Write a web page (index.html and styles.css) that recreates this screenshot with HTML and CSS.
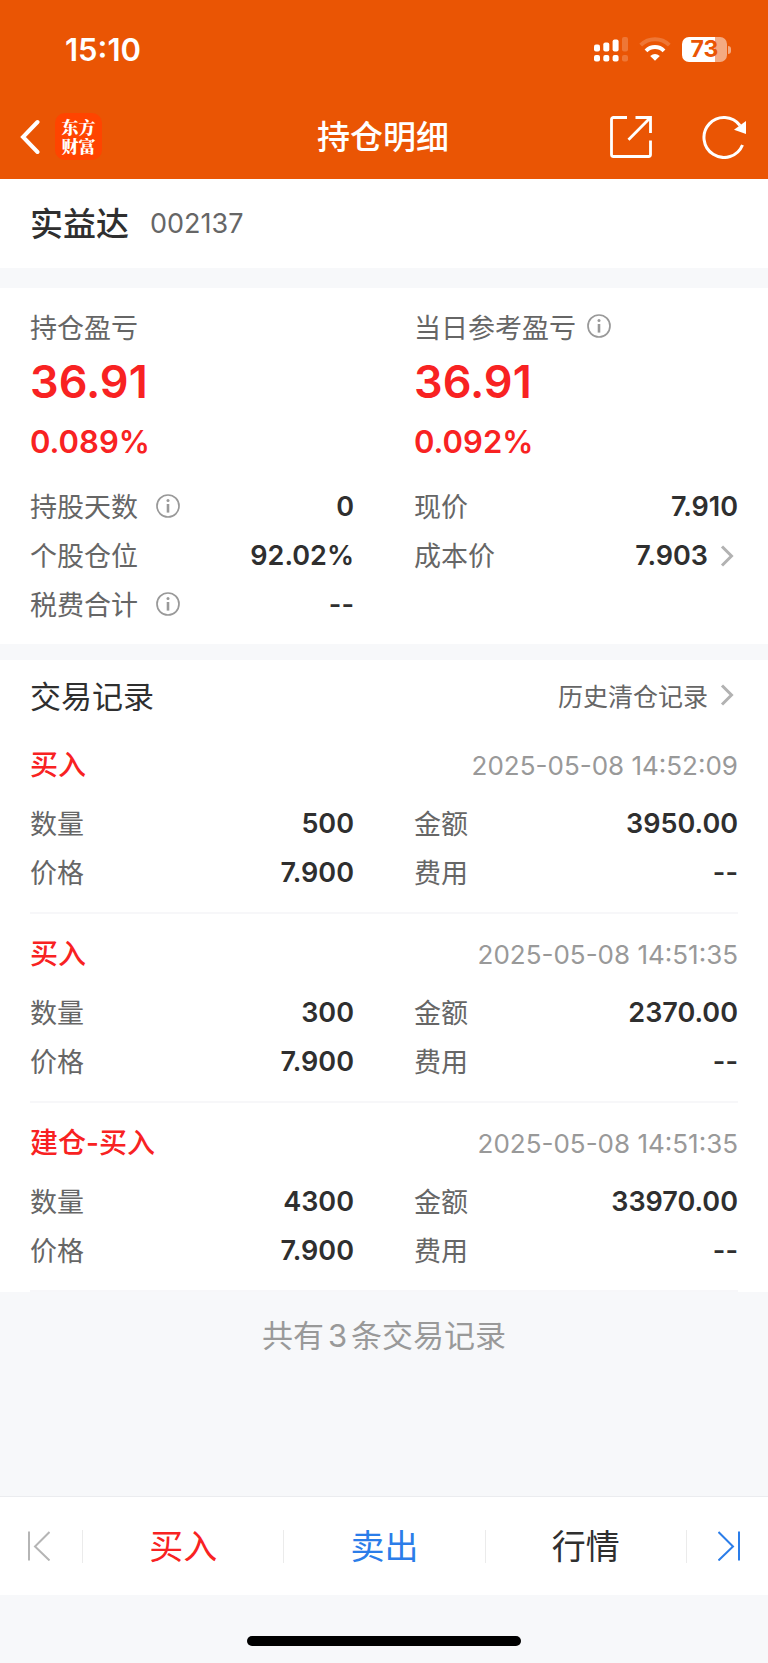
FILE: index.html
```html
<!DOCTYPE html>
<html lang="zh-CN">
<head>
<meta charset="utf-8">
<meta name="viewport" content="width=device-width, initial-scale=1">
<title>持仓明细</title>
<link rel="stylesheet" href="styles.css">
</head>
<body>
<svg class="sprite" aria-hidden="true">
  <symbol id="info" viewBox="0 0 24 24">
    <circle cx="12" cy="12" r="11" fill="none" stroke="currentColor" stroke-width="1.700"/>
    <circle cx="12" cy="6.6" r="1.5" fill="currentColor"/>
    <path d="M12 10v8.600" stroke="currentColor" stroke-width="2.600" fill="none"/>
  </symbol>
  <symbol id="chevron" viewBox="0 0 14 22">
    <path d="M2 1.500L11.500 11L2 20.500" fill="none" stroke="currentColor" stroke-width="3"/>
  </symbol>
</svg>

<header class="header">
  <div class="status">
    <time class="clock">15:10</time>
    <div class="indicators">
      <svg class="signal" viewBox="0 0 34 25" fill="#fff" aria-hidden="true">
        <rect x="0" y="7.500" width="6" height="7" rx="2"/><rect x="9.300" y="5.500" width="6" height="9" rx="2"/>
        <rect x="18.600" y="2.500" width="6" height="12" rx="2"/><rect x="28" y="0" width="6" height="14.500" rx="2" opacity=".2"/>
        <rect x="0" y="18" width="6" height="6.500" rx="2"/><rect x="9.300" y="18" width="6" height="6.500" rx="2"/>
        <rect x="18.600" y="18" width="6" height="6.500" rx="2"/><rect x="28" y="18" width="6" height="6.500" rx="2" opacity=".2"/>
      </svg>
      <svg class="wifi" viewBox="0 0 32 24" fill="none" stroke="#fff" stroke-width="4" aria-hidden="true">
        <path d="M1.700 8.200a20.300 20.300 0 0 1 28.600 0" opacity=".2"/>
        <path d="M7 13.800a12.700 12.700 0 0 1 18 0"/>
        <path d="M16 23.800l-4.800-4.700q4.800-4 9.600 0z" fill="#fff" stroke="none"/>
      </svg>
      <div class="battery"><span class="charge">73</span></div>
    </div>
  </div>
  <nav class="navbar">
    <div class="nav-side">
      <button class="icon-button" type="button" aria-label="返回">
        <svg class="back" viewBox="0 0 20 36"><path d="M17.500 3L3 18L17.500 33" fill="none" stroke="#fff" stroke-width="4" stroke-linecap="round"/></svg>
      </button>
      <div class="logo"><span>东方</span><span>财富</span></div>
    </div>
    <h1 class="page-title">持仓明细</h1>
    <div class="nav-side nav-actions">
      <button class="icon-button" type="button" aria-label="分享">
        <svg class="nav-icon" viewBox="0 0 44 44" fill="none" stroke="#fff" stroke-width="2.800">
          <path d="M18 2.500H4.500a2 2 0 0 0-2 2v35a2 2 0 0 0 2 2h35a2 2 0 0 0 2-2V25.500M26.500 2.500h15V18M41 3L19.500 24.800"/>
        </svg>
      </button>
      <button class="icon-button" type="button" aria-label="刷新">
        <svg class="nav-icon" viewBox="0 0 44 44">
          <path d="M40.500 30A20 20 0 1 1 38 10.500" fill="none" stroke="#fff" stroke-width="3"/>
          <path d="M44 6v13L32 14.800z" fill="#fff"/>
        </svg>
      </button>
    </div>
  </nav>
</header>

<main class="main">
  <section class="stock">
    <h2 class="stock-name">实益达</h2>
    <span class="stock-code">002137</span>
  </section>

  <section class="position">
    <div class="columns">
      <div class="profit">
        <div class="profit-label">持仓盈亏</div>
        <div class="profit-value">36.91</div>
        <div class="profit-rate">0.089%</div>
      </div>
      <div class="profit">
        <div class="profit-label">当日参考盈亏<button class="info-button near" type="button" aria-label="当日参考盈亏说明"><svg class="info"><use href="#info"/></svg></button></div>
        <div class="profit-value">36.91</div>
        <div class="profit-rate">0.092%</div>
      </div>
    </div>
    <div class="columns">
      <dl class="facts">
        <div class="fact"><dt>持股天数<button class="info-button" type="button" aria-label="持股天数说明"><svg class="info"><use href="#info"/></svg></button></dt><dd>0</dd></div>
        <div class="fact"><dt>个股仓位</dt><dd>92.02%</dd></div>
        <div class="fact"><dt>税费合计<button class="info-button" type="button" aria-label="税费合计说明"><svg class="info"><use href="#info"/></svg></button></dt><dd>--</dd></div>
      </dl>
      <dl class="facts">
        <div class="fact"><dt>现价</dt><dd>7.910</dd></div>
        <div class="fact"><dt>成本价</dt><dd><a class="more" href="#cost">7.903<svg class="chevron"><use href="#chevron"/></svg></a></dd></div>
      </dl>
    </div>
  </section>

  <section class="records">
    <div class="records-head">
      <h2 class="records-title">交易记录</h2>
      <a class="more history" href="#history">历史清仓记录<svg class="chevron"><use href="#chevron"/></svg></a>
    </div>
    <article class="record">
      <div class="record-head"><h3 class="side">买入</h3><time class="stamp">2025-05-08 14:52:09</time></div>
      <dl class="columns facts">
        <div class="fact"><dt>数量</dt><dd>500</dd></div>
        <div class="fact"><dt>金额</dt><dd>3950.00</dd></div>
        <div class="fact"><dt>价格</dt><dd>7.900</dd></div>
        <div class="fact"><dt>费用</dt><dd>--</dd></div>
      </dl>
    </article>
    <article class="record">
      <div class="record-head"><h3 class="side">买入</h3><time class="stamp">2025-05-08 14:51:35</time></div>
      <dl class="columns facts">
        <div class="fact"><dt>数量</dt><dd>300</dd></div>
        <div class="fact"><dt>金额</dt><dd>2370.00</dd></div>
        <div class="fact"><dt>价格</dt><dd>7.900</dd></div>
        <div class="fact"><dt>费用</dt><dd>--</dd></div>
      </dl>
    </article>
    <article class="record">
      <div class="record-head"><h3 class="side">建仓-买入</h3><time class="stamp">2025-05-08 14:51:35</time></div>
      <dl class="columns facts">
        <div class="fact"><dt>数量</dt><dd>4300</dd></div>
        <div class="fact"><dt>金额</dt><dd>33970.00</dd></div>
        <div class="fact"><dt>价格</dt><dd>7.900</dd></div>
        <div class="fact"><dt>费用</dt><dd>--</dd></div>
      </dl>
    </article>
  </section>
  <p class="total">共有<span class="count">3</span>条交易记录</p>
</main>

<footer>
  <nav class="tabs">
    <button class="tab prev" type="button" aria-label="上一只" disabled>
      <svg class="step" viewBox="0 0 22 30" fill="none" stroke="currentColor" stroke-width="2"><path d="M1 .5v29M21.500 1L7 15.500L21.500 29.500"/></svg>
    </button>
    <button class="tab buy" type="button">买入</button>
    <button class="tab sell" type="button">卖出</button>
    <button class="tab" type="button">行情</button>
    <button class="tab next" type="button" aria-label="下一只">
      <svg class="step" viewBox="0 0 22 30" fill="none" stroke="currentColor" stroke-width="2"><path d="M21 .5v29M.5 1L15 15.500L.5 29.500"/></svg>
    </button>
  </nav>
  <div class="home"><div class="home-bar"></div></div>
</footer>
</body>
</html>
```

FILE: styles.css
```css
* {
  box-sizing: border-box;
}

body {
  margin: 0;
  min-height: 100vh;
  display: flex;
  flex-direction: column;
  background: #f7f8fa;
  color: #2f2f2f;
  font-family: Inter, "Noto Sans CJK SC", sans-serif;
  font-size: 27px;
}

h1, h2, h3, p, dl, dd {
  margin: 0;
  font-weight: 400;
}

button {
  margin: 0;
  padding: 0;
  border: 0;
  background: none;
  color: inherit;
  font: inherit;
}

a {
  color: inherit;
  text-decoration: none;
}

svg {
  display: block;
}

.sprite {
  display: none;
}

/* Header */
.header {
  background: #ea5504;
  color: #fff;
}

.status {
  display: flex;
  justify-content: space-between;
  align-items: center;
  height: 98px;
  padding: 0 37px 0 65px;
}

.clock {
  font-size: 31px;
  font-weight: 600;
}

.indicators {
  display: flex;
  align-items: center;
  gap: 11px;
}

.signal {
  width: 34px;
  height: 25px;
}

.wifi {
  width: 32px;
  height: 24px;
}

.battery {
  position: relative;
  width: 45px;
  height: 25px;
  margin-right: 4px;
  border-radius: 7px;
  background: linear-gradient(90deg, #fff 73%, #f4aa82 73%);
  color: #ea5504;
  text-align: center;
}

.battery::after {
  content: "";
  position: absolute;
  left: 46px;
  top: 9px;
  width: 3px;
  height: 8px;
  border-radius: 0 3px 3px 0;
  background: #f4aa82;
}

.charge {
  display: block;
  font-size: 23px;
  font-weight: 700;
  line-height: 25px;
}

.navbar {
  display: grid;
  grid-template-columns: 1fr auto 1fr;
  align-items: center;
  height: 81px;
  padding: 0 22px 4px 20px;
}

.nav-side {
  display: flex;
  align-items: center;
  gap: 15px;
}

.nav-actions {
  justify-content: flex-end;
  gap: 49px;
}

.back {
  width: 20px;
  height: 36px;
}

.nav-icon {
  width: 44px;
  height: 44px;
}

.logo {
  display: flex;
  flex-direction: column;
  align-items: center;
  justify-content: center;
  width: 47px;
  height: 47px;
  padding-bottom: 2px;
  border-radius: 10px;
  background: #ff4400;
  font-family: "Noto Serif CJK SC", "Noto Sans CJK SC", serif;
  font-size: 17px;
  font-weight: 900;
  line-height: 19px;
}

.page-title {
  font-size: 33px;
  font-weight: 500;
  line-height: 48px;
}

/* Stock heading */
.stock {
  display: flex;
  align-items: center;
  gap: 21px;
  height: 89px;
  padding: 0 30px;
  background: #fff;
}

.stock-name {
  padding-bottom: 4px;
  font-size: 33px;
  font-weight: 500;
}

.stock-code {
  color: #666;
  font-size: 27px;
}

/* Position summary */
.position {
  margin-top: 20px;
  padding: 18px 30px 15px;
  background: #fff;
}

.columns {
  display: grid;
  grid-template-columns: 1fr 1fr;
  column-gap: 60px;
}

.profit {
  padding-bottom: 16px;
}

.profit-label {
  display: flex;
  align-items: center;
  height: 40px;
  color: #666;
}

.profit-value {
  color: #f82222;
  font-size: 45px;
  font-weight: 600;
  line-height: 72px;
}

.profit-rate {
  color: #f82222;
  font-size: 31px;
  font-weight: 600;
  line-height: 48px;
}

.info-button {
  margin-left: 18px;
  color: #999;
}

.near {
  margin-left: 11px;
}

.info {
  width: 24px;
  height: 24px;
}

.fact {
  display: flex;
  justify-content: space-between;
  align-items: center;
  height: 49px;
}

.fact dt {
  display: flex;
  align-items: center;
  padding-bottom: 2px;
  color: #666;
}

.fact dd {
  font-weight: 600;
}

.more {
  display: flex;
  align-items: center;
  gap: 12px;
}

.chevron {
  width: 14px;
  height: 22px;
  margin-right: 4px;
  color: #b2b2b2;
}

/* Trade records */
.records {
  margin-top: 16px;
  padding: 0 30px;
  background: #fff;
}

.records-head {
  display: flex;
  justify-content: space-between;
  align-items: center;
  height: 65px;
  padding-top: 5px;
}

.records-title {
  padding-bottom: 2px;
  font-size: 31px;
}

.history {
  color: #666;
  font-size: 25px;
}

.record {
  padding: 20px 0 15px;
  border-bottom: 2px solid #f7f7f9;
}

.record-head {
  display: flex;
  justify-content: space-between;
  align-items: center;
  height: 40px;
  margin-bottom: 14px;
}

.side {
  padding-bottom: 4px;
  color: #f82222;
  font-size: 28px;
  font-weight: 500;
}

.stamp {
  color: #999;
  font-size: 26px;
}

.total {
  padding: 20px 0;
  color: #999;
  font-size: 31px;
  line-height: 48px;
  text-align: center;
}

.count {
  margin: 0 4px;
}

/* Bottom actions */
footer {
  margin-top: auto;
}

.tabs {
  display: grid;
  grid-template-columns: 82px 1fr 1fr 1fr 82px;
  align-items: center;
  height: 99px;
  border-top: 1px solid #ebecef;
  background: #fff;
}

.tab {
  display: flex;
  align-items: center;
  justify-content: center;
  height: 33px;
  font-size: 34px;
  line-height: 33px;
}

.tab + .tab {
  border-left: 1px solid #ebebeb;
}

.buy {
  color: #f82222;
}

.sell,
.next {
  color: #2b7de9;
}

.next {
  padding-left: 4px;
}

.prev {
  padding-right: 5px;
  color: #b5b5b5;
}

.step {
  width: 22px;
  height: 30px;
}

.home {
  display: flex;
  justify-content: center;
  height: 68px;
  padding-top: 41px;
}

.home-bar {
  width: 274px;
  height: 10px;
  border-radius: 5px;
  background: #000;
}
```
